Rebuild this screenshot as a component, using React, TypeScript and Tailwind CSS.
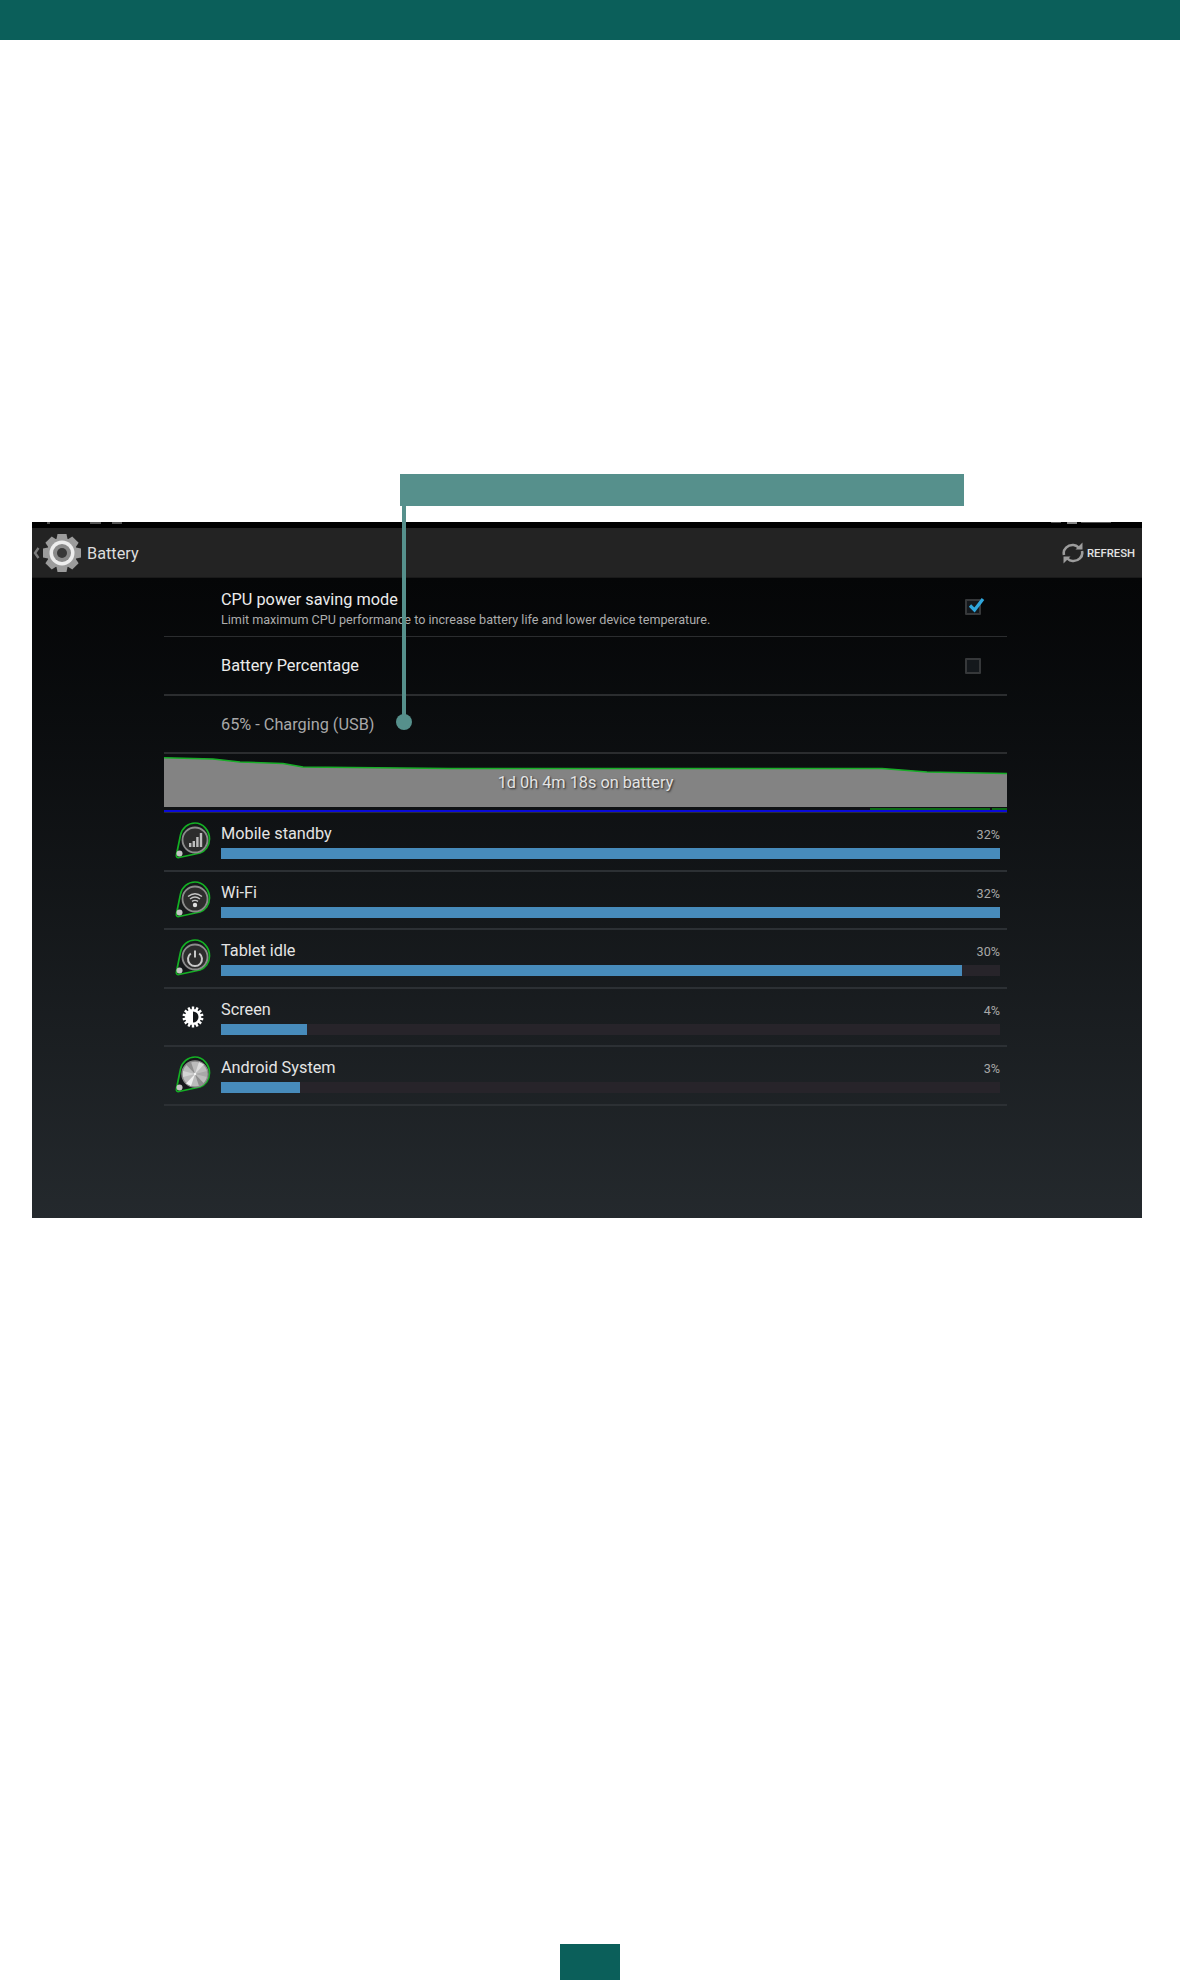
const usage = [
  { name: "Mobile standby", pct: "32%", width: 779, icon: "signal" },
  { name: "Wi-Fi", pct: "32%", width: 779, icon: "wifi" },
  { name: "Tablet idle", pct: "30%", width: 741, icon: "power" },
  { name: "Screen", pct: "4%", width: 86, icon: "screen" },
  { name: "Android System", pct: "3%", width: 79, icon: "system" },
];

function Gear() {
  const teeth = [0, 45, 90, 135, 180, 225, 270, 315];
  return (
    <svg width="40" height="40" viewBox="0 0 40 40">
      {teeth.map((a) => (
        <path key={a} d="M15.5 1h9l2 10h-13Z" fill="#9c9c9c" transform={`rotate(${a} 20 20)`} />
      ))}
      <circle cx="20" cy="20" r="15" fill="#9c9c9c" />
      <circle cx="20" cy="20" r="12.5" fill="#ededed" />
      <circle cx="20" cy="20" r="9" fill="#8a8a8a" />
      <circle cx="20" cy="20" r="5" fill="#383838" />
    </svg>
  );
}

function RefreshIcon() {
  return (
    <svg width="22" height="24" viewBox="0 0 22 24" fill="none" stroke="#9c9c9c" strokeWidth="2.6">
      <path d="M2 14C0.5 8 6 3.5 11.5 4c2 .2 3.5 1 5 2.4" />
      <path d="M20 10c1.5 6-4 10.5-9.5 10-2-.2-3.5-1-5-2.4" />
      <path d="M20.5 1.5v7h-7Z" fill="#9c9c9c" stroke="none" />
      <path d="M1.5 22.5v-7h7Z" fill="#9c9c9c" stroke="none" />
    </svg>
  );
}

function AppGlyph({ kind }: { kind: string }) {
  if (kind === "signal") {
    return (
      <g fill="#bdbdbd">
        <rect x="14" y="20" width="2.4" height="4" />
        <rect x="17.6" y="18" width="2.4" height="6" />
        <rect x="21.2" y="14" width="2.4" height="10" />
        <rect x="24.8" y="10" width="2.4" height="14" />
      </g>
    );
  }
  if (kind === "wifi") {
    return (
      <g fill="none" stroke="#c4c4c4" strokeWidth="1.4">
        <path d="M13 14.5c4.5-3.6 9.5-3.6 14 0" />
        <path d="M15 17c3-2.4 7-2.4 10 0" />
        <path d="M17 19.4c2-1.4 4-1.4 6 0" />
        <circle cx="20" cy="23" r="2.2" fill="#e0e0e0" stroke="none" />
      </g>
    );
  }
  return (
    <g fill="none" stroke="#c8c8c8" strokeWidth="2">
      <path d="M15.8 13.5a7 7 0 1 0 8.4 0" />
      <path d="M20 10.5v7" />
    </g>
  );
}

function MetalDisc() {
  return (
    <g>
      <circle cx="21" cy="18" r="13" fill="#bcbcbc" stroke="#8a8a8a" strokeWidth="1.4" />
      <path d="M21 18 12 8.5 17 6Z" fill="#8f8f8f" />
      <path d="M21 18 30 8.5 25 6Z" fill="#dddddd" />
      <path d="M21 18 12 27.5 17 30Z" fill="#eeeeee" />
      <path d="M21 18 30 27.5 25 30Z" fill="#8f8f8f" />
      <path d="M21 18 9 15v6Z" fill="#d4d4d4" />
      <path d="M21 18 33 15v6Z" fill="#a8a8a8" />
      <circle cx="21" cy="18" r="1.2" fill="#f4f4f4" />
    </g>
  );
}

function AppIcon({ kind }: { kind: string }) {
  if (kind === "screen") {
    const rays = Array.from({ length: 14 }, (_, i) => i * (360 / 14));
    return (
      <svg width="24" height="24" viewBox="0 0 24 24">
        {rays.map((a) => (
          <rect key={a} x="10.8" y="1.5" width="2.4" height="4" fill="#fff" transform={`rotate(${a} 12 12)`} />
        ))}
        <circle cx="12" cy="12" r="8" fill="#fff" />
        <path d="M12 6.5a5.5 5.5 0 0 1 0 11Z" fill="#14171a" />
      </svg>
    );
  }
  return (
    <svg width="38" height="38" viewBox="0 0 38 38" className="shrink-0">
      <path
        d="M21 1c8 0 14.5 7.5 14.5 16 0 7-4.5 12-9.5 14L5 35.5C3 36 2 34.5 2.4 33L6.5 13C8 6 14 1 21 1Z"
        fill="#15181a"
        stroke="#14b024"
        strokeWidth="1.7"
      />
      {kind === "system" ? (
        <MetalDisc />
      ) : (
        <>
          <circle cx="21" cy="18" r="12.5" fill="#2d2d2d" stroke="#8c8c8c" strokeWidth="1.8" />
          <g transform="translate(1 1)">
            <AppGlyph kind={kind} />
          </g>
        </>
      )}
      <circle cx="5.5" cy="31.5" r="3" fill="#c4c4c4" />
    </svg>
  );
}

function Checkbox({ checked }: { checked?: boolean }) {
  return (
    <div className="relative w-[16px] h-[16px] border-2 border-[#36383a] rounded-[1px] bg-[#14181c]">
      {checked && (
        <svg width="20" height="18" viewBox="0 0 20 18" className="absolute -top-[5px] left-0">
          <path d="M3 9.5 7.5 14 16 3" fill="none" stroke="#2fa6dc" strokeWidth="3.2" />
        </svg>
      )}
    </div>
  );
}

function BatteryChart() {
  return (
    <svg width="843" height="59" viewBox="0 0 843 59" className="block">
      <path
        d="M0 3.7 49 5 76 8 119 9.5 139 13 286 14.5 718 14.5 763 18 843 19.5V53H0Z"
        fill="#838383"
      />
      <path
        d="M0 3.7 49 5 76 8 119 9.5 139 13 286 14.5 718 14.5 763 18 843 19.5"
        fill="none"
        stroke="#17ae27"
        strokeWidth="1.4"
      />
      <rect x="706" y="54" width="120" height="2" fill="#0b6b14" />
      <rect x="828" y="54" width="15" height="2" fill="#0b6b14" />
      <rect x="0" y="56" width="843" height="2" fill="#0a0ad8" />
    </svg>
  );
}

export default function App() {
  return (
    <div className="relative w-[1180px] h-[1980px] bg-white flex flex-col font-['Roboto',sans-serif]">
      <div className="h-10 bg-[#0b5f5a]" />

      {/* callout */}
      <div className="absolute left-[400px] top-[474px] w-[564px] h-[32px] bg-[#56908c]" />
      <div className="absolute z-10 left-[402px] top-[506px] w-[4px] h-[216px] bg-[#56908c]" />
      <div className="absolute z-10 left-[396px] top-[714px] w-4 h-4 rounded-full bg-[#56908c]" />

      <div className="mt-[482px] ml-8 w-[1110px] h-[696px] flex flex-col bg-black text-[#e8e8e8]">
        {/* cropped status bar */}
        <div className="h-[6px] shrink-0 bg-black flex items-start">
          <div className="ml-[15px] w-[3px] h-[2px] bg-[#555]" />
          <div className="ml-[40px] w-[11px] h-[2px] bg-[#555]" />
          <div className="ml-[11px] w-[10px] h-[2px] bg-[#555]" />
          <div className="ml-[929px] w-[10px] h-[1px] bg-[#555]" />
          <div className="ml-[6px] w-[10px] h-[2px] bg-[#888]" />
          <div className="ml-[4px] w-[30px] h-[1px] bg-[#555]" />
        </div>
        <div className="h-[50px] shrink-0 flex items-center bg-[#232323] pr-[7px] border-b border-[#1a1a1a]">
          <svg width="7" height="12" viewBox="0 0 7 12" className="ml-[1px] shrink-0">
            <path d="M5.5 1 2 6l3.5 5" fill="none" stroke="#7c7c7c" strokeWidth="2.4" />
          </svg>
          <div className="ml-[2px]">
            <Gear />
          </div>
          <span className="ml-[5px] pt-[4px] text-[16.3px] text-[#dcdcdc]">Battery</span>
          <div className="ml-auto flex items-center gap-[3px]">
            <RefreshIcon />
            <span className="pt-[3px] text-[11.3px] font-medium text-[#e2e2e2]">REFRESH</span>
          </div>
        </div>

        <div className="flex-1 bg-linear-to-b from-[#050607] to-[#24292d] pl-[132px]">
          <div className="w-[843px]">
            <div className="h-[59px] flex items-center pl-[57px] pr-[26px] border-b border-[#2b2d2f]">
              <div className="flex-1 pt-[2px]">
                <div className="text-[16.3px] leading-[19px] text-[#ececec]">CPU power saving mode</div>
                <div className="mt-[3px] text-[12.6px] leading-[15px] text-[#adadad]">
                  Limit maximum CPU performance to increase battery life and lower device temperature.
                </div>
              </div>
              <Checkbox checked />
            </div>
            <div className="h-[59px] flex items-center pl-[57px] pr-[26px] border-b-2 border-[#2b2d2f]">
              <div className="flex-1 pt-[1px] text-[16.3px] text-[#ececec]">Battery Percentage</div>
              <Checkbox />
            </div>
            <div className="h-[58px] flex items-center pl-[57px] pt-[3px] border-b-2 border-[#2b2d2f] text-[16.3px] text-[#a8a8a8]">
              65% - Charging (USB)
            </div>

            <div className="relative h-[59px] border-b border-[#2a2f33] overflow-hidden">
              <BatteryChart />
              <div className="absolute inset-x-0 top-[19px] text-center text-[16.3px] leading-[20px] text-[#e4e4e4] [text-shadow:1px_1px_2px_#222]">
                1d 0h 4m 18s on battery
              </div>
            </div>

            {usage.map((row) => (
              <div key={row.name} className="h-[58.5px] flex border-b-2 border-[#2c3034]">
                <div className="w-[57px] shrink-0 flex items-center justify-center pl-[1px]">
                  <AppIcon kind={row.icon} />
                </div>
                <div className="flex-1 pr-[7px] pt-[9px]">
                  <div className="flex items-end justify-between h-[26px] pb-[4px]">
                    <span className="text-[16.3px] leading-[20px] text-[#e4e4e4]">{row.name}</span>
                    <span className="mb-[2px] text-[12.6px] leading-[14px] text-[#a8a8a8]">{row.pct}</span>
                  </div>
                  <div className="h-[11px] bg-[#27242a]">
                    <div className="h-full bg-[#478bbb]" style={{ width: row.width }} />
                  </div>
                </div>
              </div>
            ))}
          </div>
        </div>
      </div>

      <div className="mt-auto mx-auto w-[60px] h-[36px] bg-[#0b5f5a]" />
    </div>
  );
}
